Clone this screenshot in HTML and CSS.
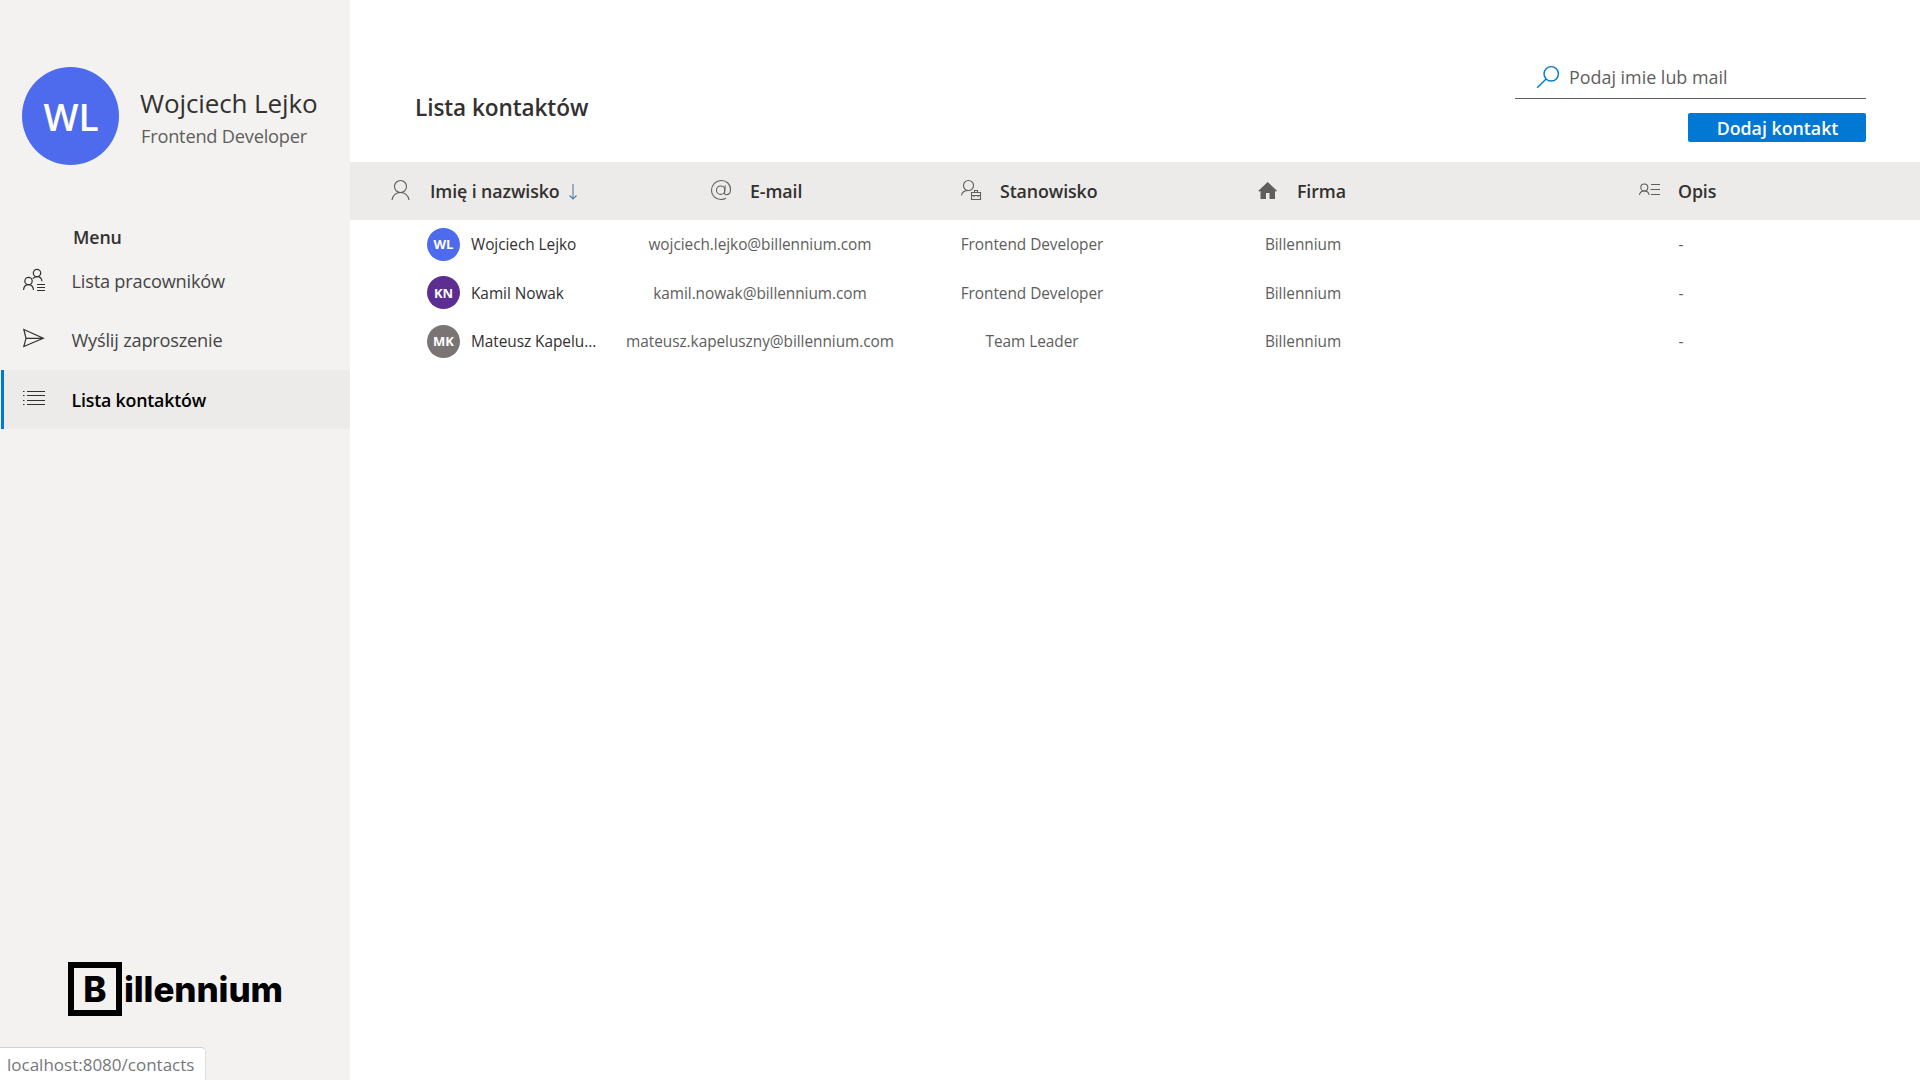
FILE: index.html
```html
<!DOCTYPE html>
<html lang="pl">
<head>
<meta charset="utf-8">
<title>Lista kontaktów</title>
<link rel="stylesheet" href="styles.css">
</head>
<body>
<div class="app">
  <aside class="sidebar">
    <div class="profile">
      <div class="avatar avatar-large blue">WL</div>
      <div class="profile-text">
        <div class="profile-name">Wojciech Lejko</div>
        <div class="profile-role">Frontend Developer</div>
      </div>
    </div>
    <div class="menu-title">Menu</div>
    <nav class="menu">
      <a class="menu-item">
        <svg class="menu-icon" viewBox="0 0 22 22"><circle cx="14" cy="4" r="3.700"/><path d="M9.800 9.600C11 8.300 12.400 7.700 14 7.700c2.700 0 4.700 1.800 5 4.600"/><circle cx="5.500" cy="12" r="3.700"/><path d="M.5 21c.3-3.200 2.300-5.300 5-5.300s4.700 2.100 5 5.300M14 15.500h8M14 18.500h8M14 21.500h8"/></svg>
        <span>Lista pracowników</span>
      </a>
      <a class="menu-item">
        <svg class="menu-icon raised" viewBox="0 0 22 22"><path d="M.8 2.500 20.300 11.300.8 19.500 3 11.300zM3 11.300h17"/></svg>
        <span>Wyślij zaproszenie</span>
      </a>
      <a class="menu-item active">
        <svg class="menu-icon raised" viewBox="0 0 22 22"><path d="M4 5.500h18M4 9.500h18M4 14.500h18M4 18.500h18"/><path d="M0 5.500h1.500M0 9.500h1.500M0 14.500h1.500M0 18.500h1.500"/></svg>
        <span>Lista kontaktów</span>
      </a>
    </nav>
    <div class="logo"><span class="logo-box">B</span><span class="logo-text">illennium</span></div>
  </aside>

  <main class="main">
    <header class="page-header">
      <h1 class="page-title">Lista kontaktów</h1>
      <div class="tools">
        <label class="search">
          <svg class="search-icon" viewBox="0 0 24 24"><circle cx="15.200" cy="8.800" r="7.200"/><path d="M10.100 13.900 1.200 22.800"/></svg>
          <span>Podaj imie lub mail</span>
        </label>
        <button class="add-button">Dodaj kontakt</button>
      </div>
    </header>

    <section class="contacts">
      <div class="grid head">
        <div class="head-cell h-name">
          <svg class="head-icon" viewBox="0 0 20 20"><circle cx="9.500" cy="6.500" r="6"/><path d="M1 20c.4-4.500 4-7.500 8.500-7.500s8.100 3 8.500 7.500"/></svg>
          <span>Imię i nazwisko</span>
          <svg class="sort-icon" viewBox="0 0 8 16"><path d="M4 0v15M.5 11.500 4 15l3.500-3.500"/></svg>
        </div>
        <div class="head-cell h-mail">
          <svg class="head-icon" viewBox="0 0 20 20"><circle cx="9.700" cy="10.200" r="4.200"/><path d="M14.300 5.500 13.500 12c-.2 1.800.4 2.700 1.800 2.700 2.600 0 4.200-2.200 4.200-5.200C19.500 4.200 15.600.5 10.300.5 4.800.5.500 4.700.500 10.200s4 9.300 9.500 9.300c1.900 0 3.500-.4 5-1.200"/></svg>
          <span>E-mail</span>
        </div>
        <div class="head-cell h-job">
          <svg class="head-icon" viewBox="0 0 20 20"><circle cx="7.500" cy="5.500" r="5"/><path d="M.5 15.500c.4-3 3-5 7-5M10.500 12.500h9v7h-9zM13.500 12.500v-2h3v2M10.500 15.500h9M13 15v2.300M17 15v2.300"/></svg>
          <span>Stanowisko</span>
        </div>
        <div class="head-cell h-company">
          <svg class="head-icon solid" viewBox="0 0 20 20"><path d="M9.700 2 19 10.800l-.9 1-1.100-1V19h-5.500v-6H8v6H2.500v-8.200l-1.200 1-.9-1z"/></svg>
          <span>Firma</span>
        </div>
        <div class="head-cell h-note">
          <svg class="head-icon" viewBox="0 0 20 20"><circle cx="5.300" cy="7.500" r="3.500"/><path d="M.5 15c.3-2.500 2.300-4 4.800-4s4.500 1.500 4.800 4M12 4.500h9M11.500 9.500h9.500M12 14.500h9"/></svg>
          <span>Opis</span>
        </div>
      </div>
      <div class="grid row">
        <div class="person"><span class="avatar avatar-small blue">WL</span><span class="person-name">Wojciech Lejko</span></div>
        <div class="cell">wojciech.lejko@billennium.com</div>
        <div class="cell">Frontend Developer</div>
        <div class="cell">Billennium</div>
        <div class="cell note">-</div>
      </div>
      <div class="grid row">
        <div class="person"><span class="avatar avatar-small purple">KN</span><span class="person-name">Kamil Nowak</span></div>
        <div class="cell">kamil.nowak@billennium.com</div>
        <div class="cell">Frontend Developer</div>
        <div class="cell">Billennium</div>
        <div class="cell note">-</div>
      </div>
      <div class="grid row">
        <div class="person"><span class="avatar avatar-small gray">MK</span><span class="person-name">Mateusz Kapelu...</span></div>
        <div class="cell">mateusz.kapeluszny@billennium.com</div>
        <div class="cell">Team Leader</div>
        <div class="cell">Billennium</div>
        <div class="cell note">-</div>
      </div>
    </section>
  </main>
  <div class="status-bar">localhost:8080/contacts</div>
</div>
</body>
</html>
```
FILE: styles.css
```css
* { box-sizing: border-box; }

body {
  margin: 0;
  background: #fff;
  color: #323130;
  font-family: "Open Sans", "Noto Sans", sans-serif;
}

svg { display: block; flex: none; fill: none; stroke: currentColor; overflow: visible; }

.app {
  position: relative;
  display: flex;
  height: 1080px;
  overflow: hidden;
}

/* Sidebar */
.sidebar {
  display: flex;
  flex-direction: column;
  width: 350px;
  padding: 67px 0 64px;
  background: #f3f2f1;
}

.profile { display: flex; align-items: center; gap: 21px; padding-left: 22px; }

.avatar {
  display: flex;
  flex: none;
  align-items: center;
  justify-content: center;
  border-radius: 50%;
  color: #fff;
}
.avatar-large { width: 97px; height: 98px; padding: 1px 0 0 1px; font-size: 37px; font-weight: 600; }
.avatar-small { width: 33px; height: 33px; font-size: 13px; font-weight: 700; line-height: 18px; }
.blue { background: #4f6bed; }
.purple { background: #5c2e91; }
.gray { background: #7a7574; }

.profile-name { padding-top: 1px; font-size: 26px; font-weight: 400; letter-spacing: -.1px; line-height: 36px; white-space: nowrap; }
.profile-role { margin-top: 3px; padding-left: 1px; color: #605e5c; font-size: 18.200px; letter-spacing: -.2px; line-height: 24px; white-space: nowrap; }

.menu-title {
  margin: 60px 0 2px 73px;
  font-size: 17.800px;
  font-weight: 600;
  letter-spacing: -.1px;
  line-height: 24px;
}

.menu-item {
  display: flex;
  align-items: center;
  gap: 26.500px;
  height: 59.500px;
  padding-left: 23px;
  color: #444;
  font-size: 18.200px;
  letter-spacing: -.2px;
}
.menu-icon { width: 22px; height: 22px; margin-top: -2px; color: #323130; stroke-width: 1.200; }
.menu-icon.raised { margin-top: -5px; }
.menu-item.active {
  height: 59px;
  padding-left: 19px;
  border-left: 3px solid #0078d4;
  margin-left: 1px;
  border-radius: 0 3px 3px 0;
  background: #edebe9;
  color: #000;
  font-size: 17.800px;
  font-weight: 600;
}

.logo {
  display: flex;
  align-items: center;
  gap: 2px;
  margin: auto 0 0 68px;
  color: #000;
  font-family: Inter, "Liberation Sans", sans-serif;
  font-size: 35px;
  font-weight: 800;
}
.logo-text { letter-spacing: -.1px; }
.logo-box {
  display: flex;
  align-items: center;
  justify-content: center;
  width: 54px;
  height: 54px;
  border: 6px solid #000;
}

/* Page header */
.main { flex: 1; }

.page-header {
  display: flex;
  justify-content: space-between;
  height: 162px;
  padding: 56px 54px 0 65px;
}
.page-title { margin: 36px 0 0; font-size: 22.600px; font-weight: 600; letter-spacing: -.1px; line-height: 32px; }

.tools { display: flex; flex-direction: column; align-items: flex-end; gap: 14px; width: 351px; }

.search {
  display: flex;
  align-items: center;
  gap: 9px;
  width: 100%;
  height: 43px;
  padding-left: 21px;
  border-bottom: 1px solid #605e5c;
  color: #605e5c;
  font-size: 17.900px;
}
.search-icon { width: 24px; height: 24px; color: #0078d4; stroke-width: 1.400; }

.add-button {
  width: 178px;
  height: 29px;
  padding: 1px 0 0 1px;
  border: 0;
  border-radius: 2px;
  background: #0078d4;
  color: #fff;
  font: 600 17.800px/28px "Open Sans", "Noto Sans", sans-serif;
}

/* Contacts table */
.grid { display: grid; grid-template-columns: 274px 272px 272px 270px 1fr; align-items: center; }

.head { height: 58px; background: #edebe9; font-size: 17.800px; font-weight: 600; letter-spacing: -.1px; }
.head-cell { display: flex; align-items: center; gap: 19px; white-space: nowrap; }
.head-icon { width: 20px; height: 20px; margin-top: -2px; color: #605e5c; stroke-width: 1.100; }
.head-icon.solid { fill: currentColor; stroke: none; }
.sort-icon { width: 8px; height: 16px; margin: 2px 0 0 -10px; color: #4f7fa3; stroke-width: 1.100; }
.h-name { padding-left: 41px; }
.h-mail { padding-left: 87px; }
.h-job { padding-left: 65px; }
.h-company { padding-left: 90px; }
.h-note { padding-left: 201px; }

.row { height: 48.500px; font-size: 15.400px; letter-spacing: -.05px; line-height: 22px; }
.person { display: flex; align-items: center; gap: 11px; padding-left: 77px; white-space: nowrap; }
.person-name { padding-top: 2px; }
.cell { padding-top: 2px; color: #605e5c; text-align: center; white-space: nowrap; }
.note { padding-left: 4px; }

/* Link preview shown over the page corner */
.status-bar {
  position: absolute;
  left: 0;
  bottom: 0;
  width: 206px;
  height: 33px;
  padding-left: 7px;
  border-top: 1px solid #d0d0d0;
  border-right: 1px solid #dedede;
  border-radius: 0 5px 0 0;
  background: #fff;
  color: #75777a;
  font-size: 17px;
  line-height: 33px;
}
```
